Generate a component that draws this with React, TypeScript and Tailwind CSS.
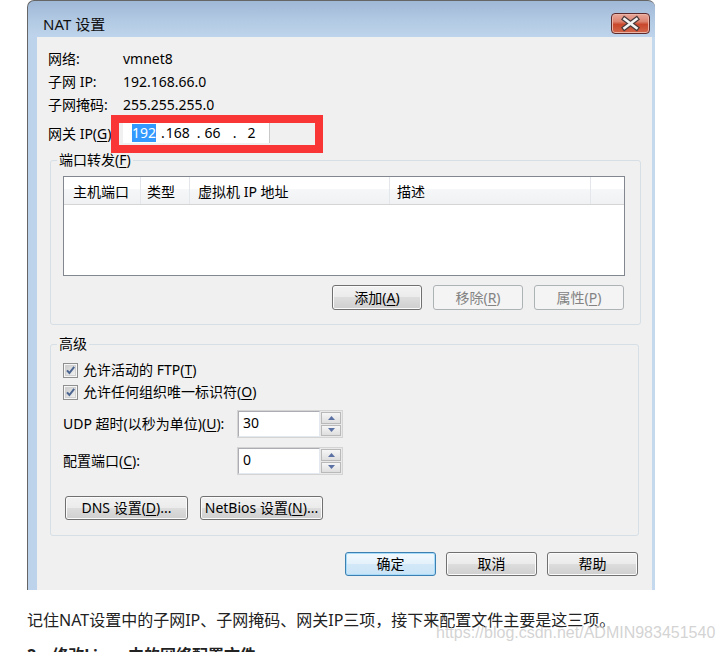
import React from "react";

const ui = "font-['Noto_Sans','Noto_Sans_CJK_SC',sans-serif]";

function Acc({ children }: { children: React.ReactNode }) {
  return <span className="underline underline-offset-[2px]">{children}</span>;
}

type BtnState = "normal" | "disabled" | "default";

function Button({
  children,
  className,
  state = "normal",
}: {
  children: React.ReactNode;
  className: string;
  state?: BtnState;
}) {
  const look =
    state === "disabled"
      ? "border-[#adb2b5] bg-[#f4f4f4] text-[#838383]"
      : state === "default"
        ? "border-[#3c7fb1] bg-[linear-gradient(to_bottom,#f2f9fd_0%,#e3f1fb_50%,#d3e9f8_50%,#c9e3f6_100%)] shadow-[inset_0_0_0_1px_#a6dcf9] text-black"
        : "border-[#707070] bg-[linear-gradient(to_bottom,#f2f2f2_0%,#ebebeb_50%,#dddddd_50%,#cfcfcf_100%)] shadow-[inset_0_0_0_1px_#fbfbfb] text-black";
  return (
    <div
      className={`flex items-center justify-center rounded-[3px] border text-[14px] leading-[18px] ${look} ${className}`}
    >
      {children}
    </div>
  );
}

function InfoRow({ label, value }: { label: string; value: string }) {
  return (
    <div className="flex h-[23px] items-center pl-[11px] text-[14px] leading-[18px]">
      <span className="w-[75px]">{label}</span>
      <span>{value}</span>
    </div>
  );
}

function CheckBox({ id }: { id: string }) {
  return (
    <svg width="15" height="15" viewBox="0 0 15 15">
      <defs>
        <linearGradient id={id} x1="0" y1="0" x2="1" y2="1">
          <stop offset="0" stopColor="#cbcbcb" />
          <stop offset="1" stopColor="#f3f3f3" />
        </linearGradient>
      </defs>
      <rect x="0.5" y="0.5" width="14" height="14" fill="#f6f6f6" stroke="#8f8f8f" />
      <rect x="2.5" y="2.5" width="10" height="10" fill={`url(#${id})`} stroke="#d0d0d0" />
      <path d="M4 7.3 L6.4 10 L11.2 3.8" fill="none" stroke="#4c6591" strokeWidth="2" />
    </svg>
  );
}

function Arrow({ up }: { up?: boolean }) {
  return (
    <svg width="7" height="4" viewBox="0 0 7 4">
      <path d={up ? "M0 4 L3.5 0 L7 4Z" : "M0 0 L3.5 4 L7 0Z"} fill="#5b70a3" />
    </svg>
  );
}

function SpinBox({ value }: { value: string }) {
  return (
    <div className="flex h-[28px] border border-[#d4d4d4] bg-[#e9e9e9]">
      <div className="w-[82px] border border-[#abadb3] border-r-[#e3e9ef] border-b-[#e3e9ef] bg-white pl-[4px] pt-[2px] text-[14px] leading-[18px]">
        {value}
      </div>
      <div className="flex w-[22px] flex-col gap-px p-px">
        <div className="flex flex-1 items-center justify-center border border-[#b9b9b9] bg-[linear-gradient(to_bottom,#f6f6f6,#dedede)]">
          <Arrow up />
        </div>
        <div className="flex flex-1 items-center justify-center border border-[#b9b9b9] bg-[linear-gradient(to_bottom,#f6f6f6,#dedede)]">
          <Arrow />
        </div>
      </div>
    </div>
  );
}

function CloseButton() {
  return (
    <div className="h-[21px] w-[39px] rounded-[4px] border border-[#5e2b2d] bg-[linear-gradient(to_bottom,#e9a899_0%,#dc826f_40%,#c9472c_55%,#d3674b_100%)] shadow-[inset_0_0_0_1px_#eab3a6]">
      <svg width="37" height="19" viewBox="0 0 37 19">
        <path d="M12.5 5 L24.5 14 M24.5 5 L12.5 14" stroke="#4a3a3a" strokeWidth="5" strokeLinecap="square" />
        <path d="M12.5 5 L24.5 14 M24.5 5 L12.5 14" stroke="#f4f4f4" strokeWidth="2.6" strokeLinecap="square" />
      </svg>
    </div>
  );
}

const columns = [
  { label: "主机端口", w: "w-[77px] pl-[9px] border-r" },
  { label: "类型", w: "w-[49px] pl-[6px] border-r" },
  { label: "虚拟机 IP 地址", w: "w-[200px] pl-[8px] border-r" },
  { label: "描述", w: "w-[201px] pl-[7px] border-r" },
  { label: "", w: "flex-1" },
];

export default function App() {
  return (
    <div className={`relative h-[652px] w-[722px] overflow-hidden bg-white text-black ${ui}`}>
      {/* Dialog window */}
      <div className="ml-[27px] w-[628px] overflow-hidden rounded-t-[7px] border-l border-t border-[#666] bg-[linear-gradient(to_bottom,#9fb8d6_0px,#b3cae4_20px,#bed4ec_36px)]">
        <div className="flex h-[36px] items-start justify-between pl-[15px] pr-[5px]">
          <span className="mt-[14px] text-[15px] leading-[18px] text-[#111]">NAT 设置</span>
          <div className="mt-[12px]">
            <CloseButton />
          </div>
        </div>

        <div className="flex">
          <div className="w-[9px] bg-[#bcd3eb]" />
          <div className="flex h-[553px] w-[615px] flex-col bg-[#f0f0f0] pt-[10px]">
            <InfoRow label="网络:" value="vmnet8" />
            <InfoRow label="子网 IP:" value="192.168.66.0" />
            <InfoRow label="子网掩码:" value="255.255.255.0" />

            <div className="-mt-px flex h-[38px] items-center pl-[11px] text-[14px] leading-[18px]">
              <span className="w-[63px] whitespace-nowrap">
                网关 IP(<Acc>G</Acc>)
              </span>
              <div className="h-[38px] w-[212px] border-[8px] border-[#fa3535] bg-[#f0f0f0] pl-[4px]">
                <div className="flex h-[20px] w-[147px] items-center border-r border-[#c9c9c9] bg-white pl-[9px] text-[14px] leading-[18px]">
                  <span className="bg-[#3399ff] text-white">192</span>
                  <span className="ml-[5px]">.</span>
                  <span className="ml-[1px]">168</span>
                  <span className="ml-[7px]">.</span>
                  <span className="ml-[4px]">66</span>
                  <span className="ml-[12px]">.</span>
                  <span className="ml-[11px]">2</span>
                </div>
              </div>
            </div>

            {/* Port forwarding */}
            <fieldset className="mx-[13px] -mt-px rounded-[3px] border border-[#d5dfe5] pb-[14px] pl-[12px] pr-[15px] pt-[8px]">
              <legend className="-ml-[6px] px-[2px] text-[14px] leading-[16px]">
                端口转发(<Acc>F</Acc>)
              </legend>
              <div className="h-[100px] w-[562px] border border-[#828790] bg-white">
                <div className="flex h-[28px] border-b border-[#d5d5d5] bg-[linear-gradient(to_bottom,#ffffff_0%,#ffffff_45%,#f6f7f8_45%,#f0f1f3_100%)]">
                  {columns.map((c, i) => (
                    <div
                      key={i}
                      className={`flex items-center whitespace-nowrap border-[#e3e6ea] pt-[3px] text-[14px] leading-[18px] ${c.w}`}
                    >
                      {c.label}
                    </div>
                  ))}
                </div>
              </div>
              <div className="mt-[9px] flex justify-end gap-[11px] pr-[1px]">
                <Button className="h-[25px] w-[90px]">
                  添加(<Acc>A</Acc>)
                </Button>
                <Button className="h-[25px] w-[90px]" state="disabled">
                  移除(<Acc>R</Acc>)
                </Button>
                <Button className="h-[25px] w-[90px]" state="disabled">
                  属性(<Acc>P</Acc>)
                </Button>
              </div>
            </fieldset>

            {/* Advanced */}
            <fieldset className="mx-[13px] mt-[11px] rounded-[3px] border border-[#d5dfe5] pb-[15px] pl-[12px] pr-[15px] pt-[7px]">
              <legend className="-ml-[6px] px-[2px] text-[14px] leading-[16px]">高级</legend>
              <div className="flex h-[22px] items-center gap-[5px] text-[14px] leading-[18px]">
                <CheckBox id="cb1" />
                <span>
                  允许活动的 FTP(<Acc>T</Acc>)
                </span>
              </div>
              <div className="flex h-[22px] items-center gap-[5px] text-[14px] leading-[18px]">
                <CheckBox id="cb2" />
                <span>
                  允许任何组织唯一标识符(<Acc>O</Acc>)
                </span>
              </div>
              <div className="mt-[7px] flex items-center text-[14px] leading-[18px]">
                <span className="w-[174px] whitespace-nowrap">
                  UDP 超时(以秒为单位)(<Acc>U</Acc>):
                </span>
                <SpinBox value="30" />
              </div>
              <div className="mt-[9px] flex items-center text-[14px] leading-[18px]">
                <span className="w-[174px] whitespace-nowrap">
                  配置端口(<Acc>C</Acc>):
                </span>
                <SpinBox value="0" />
              </div>
              <div className="ml-[2px] mt-[21px] flex gap-[12px]">
                <Button className="h-[24px] w-[123px]">
                  DNS 设置(<Acc>D</Acc>)...
                </Button>
                <Button className="h-[24px] w-[123px]">
                  NetBios 设置(<Acc>N</Acc>)...
                </Button>
              </div>
            </fieldset>

            <div className="mt-[16px] flex justify-end gap-[10px] pr-[14px]">
              <Button className="h-[24px] w-[91px]" state="default">
                确定
              </Button>
              <Button className="h-[24px] w-[91px]">取消</Button>
              <Button className="h-[24px] w-[91px]">帮助</Button>
            </div>
          </div>
          <div className="w-[3px] bg-[#c4d8ee]" />
        </div>
      </div>

      {/* Article text below the screenshot */}
      <p className="mt-[18px] pl-[27px] text-[16px] leading-[24px] text-[#222]">
        记住NAT设置中的子网IP、子网掩码、网关IP三项，接下来配置文件主要是这三项。
      </p>
      <p className="mt-[11px] pl-[27px] text-[16px] font-bold leading-[24px] text-[#222]">
        2、修改Linux中的网络配置文件
      </p>

      <div className="absolute left-[436px] top-[625px] font-['Liberation_Sans',Arial,sans-serif] text-[16px] leading-[16px] text-[#c8c8c8]/80">
        https://blog.csdn.net/ADMIN983451540
      </div>
    </div>
  );
}
